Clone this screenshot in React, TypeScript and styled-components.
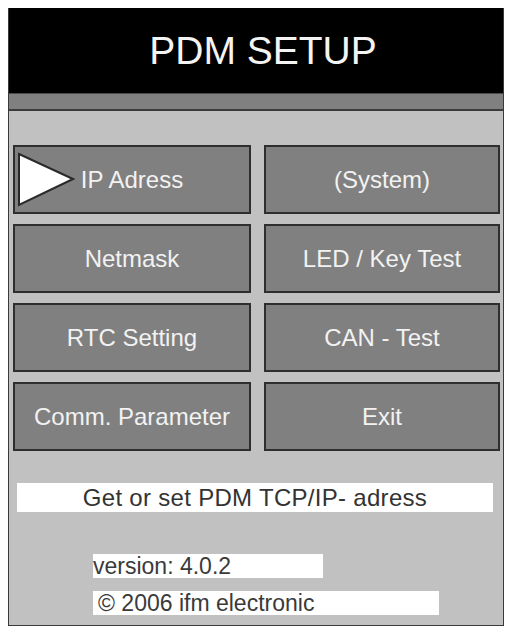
import React from 'react';
import styled, { createGlobalStyle } from 'styled-components';

const GlobalStyle = createGlobalStyle`
  html, body {
    margin: 0;
    padding: 0;
    background: #ffffff;
    font-family: "Liberation Sans", Arial, sans-serif;
  }
`;

type ButtonItem = {
  label: string;
  selected?: boolean;
};

const buttons: ButtonItem[] = [
  { label: 'IP Adress', selected: true },
  { label: '(System)' },
  { label: 'Netmask' },
  { label: 'LED / Key Test' },
  { label: 'RTC Setting' },
  { label: 'CAN - Test' },
  { label: 'Comm. Parameter' },
  { label: 'Exit' },
];

const Pointer = () => (
  <Arrow width="58" height="55" viewBox="0 0 58 55">
    <polygon points="2,2 56,27 2,53" fill="#ffffff" stroke="#2a2a2a" strokeWidth="2" strokeLinejoin="miter" />
  </Arrow>
);

export default function App() {
  return (
    <>
      <GlobalStyle />
      <Frame>
        <Header>PDM SETUP</Header>
        <Strip />
        <Content>
          <ButtonGrid>
            {buttons.map((b) => (
              <MenuButton key={b.label}>
                {b.selected && <Pointer />}
                {b.label}
              </MenuButton>
            ))}
          </ButtonGrid>
          <StatusBar>Get or set PDM TCP/IP- adress</StatusBar>
          <InfoBox $width={230} $indent={0} $top={42}>version: 4.0.2</InfoBox>
          <InfoBox $width={346} $indent={5} $top={13}>© 2006 ifm electronic</InfoBox>
        </Content>
      </Frame>
    </>
  );
}

const Frame = styled.div`
  margin: 8px 0 0 8px;
  width: 496px;
  height: 618px;
  box-sizing: border-box;
  border: 1px solid #3a3a3a;
  border-top: none;
  background: #c1c1c1;
  display: flex;
  flex-direction: column;
  overflow: hidden;
`;

const Header = styled.div`
  height: 85px;
  background: #000000;
  color: #f4f4f4;
  font-size: 39px;
  display: flex;
  align-items: center;
  justify-content: center;
  padding-left: 14px;
  box-sizing: border-box;
`;

const Strip = styled.div`
  height: 15px;
  background: #808080;
  border-top: 1px solid #4a4a4a;
  border-bottom: 2px solid #3c3c3c;
`;

const Content = styled.div`
  flex: 1;
  display: flex;
  flex-direction: column;
  padding: 34px 3px 0 3px;
`;

const ButtonGrid = styled.div`
  display: grid;
  grid-template-columns: 238px 236px;
  column-gap: 13px;
  row-gap: 10px;
  padding-left: 1px;
`;

const MenuButton = styled.div`
  position: relative;
  height: 69px;
  box-sizing: border-box;
  background: #808080;
  border: 2px solid #2e2e2e;
  color: #f2f2f2;
  font-size: 24px;
  display: flex;
  align-items: center;
  justify-content: center;
`;

const Arrow = styled.svg`
  position: absolute;
  left: 2px;
  top: 5px;
`;

const StatusBar = styled.div`
  margin: 32px 7px 0 5px;
  height: 29px;
  background: #ffffff;
  color: #333333;
  font-size: 24px;
  letter-spacing: 0.3px;
  display: flex;
  align-items: center;
  justify-content: center;
`;

const InfoBox = styled.div<{ $width: number; $indent: number; $top: number }>`
  margin-left: 81px;
  margin-top: ${(p) => p.$top}px;
  width: ${(p) => p.$width}px;
  height: 24px;
  box-sizing: border-box;
  padding-left: ${(p) => p.$indent}px;
  background: #ffffff;
  color: #3a3a3a;
  font-size: 23px;
  line-height: 24px;
  white-space: nowrap;
`;
